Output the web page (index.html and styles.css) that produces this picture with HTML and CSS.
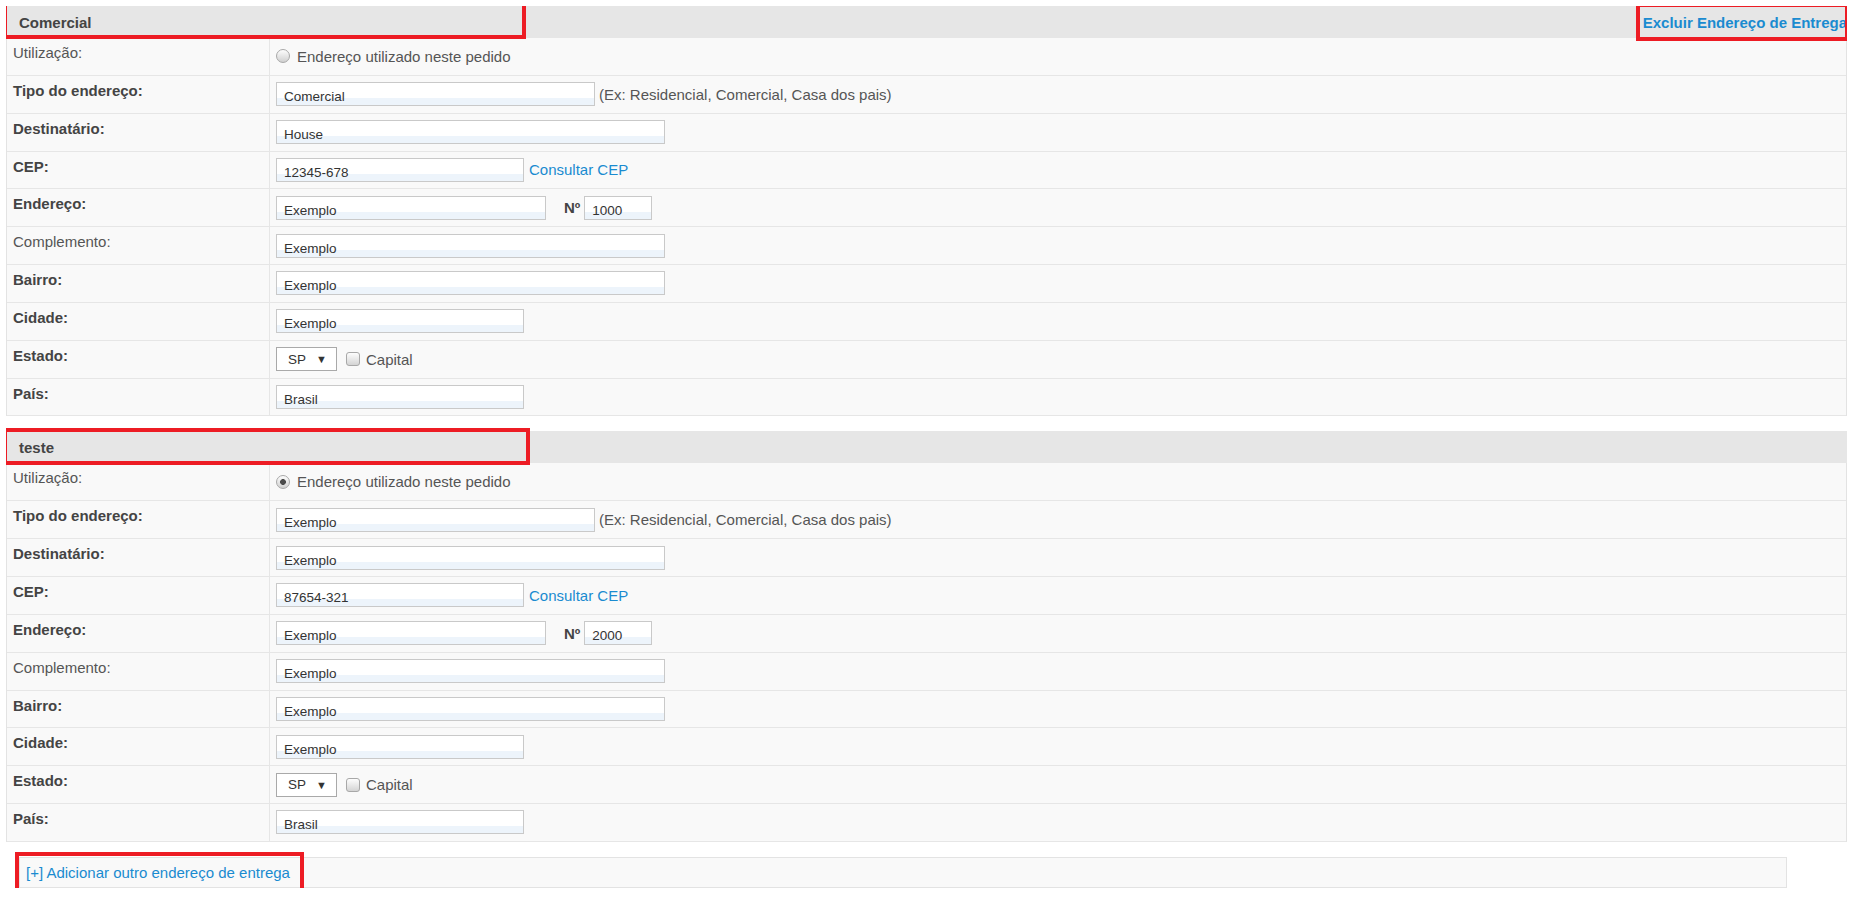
FILE: index.html
```html
<!DOCTYPE html>
<html>
<head>
  <meta charset="utf-8">
  <title>Endereços de Entrega</title>
  <link rel="stylesheet" href="styles.css">
</head>
<body>
  <div class="address">
    <div class="address-head">
      <span class="address-name">Comercial</span>
      <a class="remove-link" href="#">Excluir Endereço de Entrega</a>
      <span class="mark mark-name"></span>
      <span class="mark mark-remove"></span>
    </div>
    <div class="fields">
      <div class="row">
        <div class="label light">Utilização:</div>
        <div class="value"><input type="radio" class="radio" name="uso"><span>Endereço utilizado neste pedido</span></div>
      </div>
      <div class="row">
        <div class="label">Tipo do endereço:</div>
        <div class="value"><input class="input w-type" type="text" value="Comercial"><span class="hint">(Ex: Residencial, Comercial, Casa dos pais)</span></div>
      </div>
      <div class="row">
        <div class="label">Destinatário:</div>
        <div class="value"><input class="input w-long" type="text" value="House"></div>
      </div>
      <div class="row">
        <div class="label">CEP:</div>
        <div class="value"><input class="input w-mid" type="text" value="12345-678"><a class="cep-link" href="#">Consultar CEP</a></div>
      </div>
      <div class="row">
        <div class="label">Endereço:</div>
        <div class="value"><input class="input w-street" type="text" value="Exemplo"><span class="num-label">Nº</span><input class="input w-num" type="text" value="1000"></div>
      </div>
      <div class="row">
        <div class="label light">Complemento:</div>
        <div class="value"><input class="input w-long" type="text" value="Exemplo"></div>
      </div>
      <div class="row">
        <div class="label">Bairro:</div>
        <div class="value"><input class="input w-long" type="text" value="Exemplo"></div>
      </div>
      <div class="row">
        <div class="label">Cidade:</div>
        <div class="value"><input class="input w-mid" type="text" value="Exemplo"></div>
      </div>
      <div class="row">
        <div class="label">Estado:</div>
        <div class="value"><span class="select">SP</span><input type="checkbox" class="check"><span>Capital</span></div>
      </div>
      <div class="row">
        <div class="label">País:</div>
        <div class="value"><input class="input w-mid" type="text" value="Brasil"></div>
      </div>
    </div>
  </div>

  <div class="address">
    <div class="address-head">
      <span class="address-name">teste</span>
      <span class="mark mark-name2"></span>
    </div>
    <div class="fields">
      <div class="row">
        <div class="label light">Utilização:</div>
        <div class="value"><input type="radio" class="radio" name="uso" checked><span>Endereço utilizado neste pedido</span></div>
      </div>
      <div class="row">
        <div class="label">Tipo do endereço:</div>
        <div class="value"><input class="input w-type" type="text" value="Exemplo"><span class="hint">(Ex: Residencial, Comercial, Casa dos pais)</span></div>
      </div>
      <div class="row">
        <div class="label">Destinatário:</div>
        <div class="value"><input class="input w-long" type="text" value="Exemplo"></div>
      </div>
      <div class="row">
        <div class="label">CEP:</div>
        <div class="value"><input class="input w-mid" type="text" value="87654-321"><a class="cep-link" href="#">Consultar CEP</a></div>
      </div>
      <div class="row">
        <div class="label">Endereço:</div>
        <div class="value"><input class="input w-street" type="text" value="Exemplo"><span class="num-label">Nº</span><input class="input w-num" type="text" value="2000"></div>
      </div>
      <div class="row">
        <div class="label light">Complemento:</div>
        <div class="value"><input class="input w-long" type="text" value="Exemplo"></div>
      </div>
      <div class="row">
        <div class="label">Bairro:</div>
        <div class="value"><input class="input w-long" type="text" value="Exemplo"></div>
      </div>
      <div class="row">
        <div class="label">Cidade:</div>
        <div class="value"><input class="input w-mid" type="text" value="Exemplo"></div>
      </div>
      <div class="row">
        <div class="label">Estado:</div>
        <div class="value"><span class="select">SP</span><input type="checkbox" class="check"><span>Capital</span></div>
      </div>
      <div class="row">
        <div class="label">País:</div>
        <div class="value"><input class="input w-mid" type="text" value="Brasil"></div>
      </div>
    </div>
  </div>

  <div class="add-box">
    <a class="add-link" href="#">[+] Adicionar outro endereço de entrega</a>
    <span class="mark mark-add"></span>
  </div>
</body>
</html>
```

FILE: styles.css
```css
body {
  margin: 6px 7px 0 6px;
  font-family: "Liberation Sans", Arial, sans-serif;
  font-size: 15px;
  color: #555;
  background: #fff;
}

a {
  color: #1a8bd0;
  text-decoration: none;
}

/* bloco de endereço */
.address {
  margin-bottom: 15px;
}

.address-head {
  position: relative;
  display: flex;
  align-items: center;
  justify-content: space-between;
  height: 32px;
  padding-left: 13px;
  background: #e6e6e6;
}

.address-name {
  font-weight: bold;
  color: #444;
}

.remove-link {
  font-weight: bold;
}

.fields {
  border-left: 1px solid #e3e3e3;
  border-right: 1px solid #e3e3e3;
  background: #f9f9f9;
}

.row {
  display: grid;
  grid-template-columns: 263px 1fr;
  height: 37.85px;
  box-sizing: border-box;
  border-bottom: 1px solid #e6e6e6;
}

.label {
  padding: 6px 0 0 6px;
  line-height: 18px;
  border-right: 1px solid #e6e6e6;
  font-weight: bold;
  color: #444;
}

.label.light {
  font-weight: normal;
  color: #555;
}

.value {
  display: flex;
  align-items: center;
  padding-left: 6px;
  white-space: nowrap;
}

/* campos */
.input {
  box-sizing: border-box;
  height: 24px;
  margin: 0;
  padding: 5px 7px 0;
  border: 1px solid #c9c9c9;
  border-radius: 0;
  background: linear-gradient(#fff 0, #fff 70%, #edf4fb 70%, #edf4fb 100%);
  font-family: "Liberation Sans", Arial, sans-serif;
  font-size: 13.5px;
  color: #333;
  outline: none;
}

.w-type { width: 319px; }
.w-long { width: 389px; }
.w-mid { width: 248px; }
.w-street { width: 270px; }
.w-num { width: 68px; }

.hint {
  margin-left: 4px;
}

.cep-link {
  margin-left: 5px;
}

.num-label {
  margin: 0 4px 0 18px;
  font-weight: bold;
  color: #444;
}

.radio {
  -webkit-appearance: none;
  appearance: none;
  box-sizing: border-box;
  width: 14px;
  height: 14px;
  margin: 0 7px 0 0;
  border: 1px solid #a8a8a8;
  border-radius: 50%;
  background: linear-gradient(#fdfdfd, #d0d0d0);
}

.radio:checked {
  background: radial-gradient(circle, #4a4a4a 0, #4a4a4a 2.6px, transparent 3.2px),
    linear-gradient(#fdfdfd, #d0d0d0);
}

.select {
  position: relative;
  box-sizing: border-box;
  display: flex;
  align-items: center;
  width: 61px;
  height: 24px;
  padding-left: 11px;
  border: 1px solid #a9a9a9;
  background: #fff;
  font-size: 13.5px;
  color: #333;
}

.select::after {
  content: "▼";
  position: absolute;
  right: 9px;
  top: 5px;
  font-size: 11px;
  color: #333;
}

.check {
  -webkit-appearance: none;
  appearance: none;
  box-sizing: border-box;
  width: 14px;
  height: 14px;
  margin: 0 6px 0 9px;
  border: 1px solid #a8a8a8;
  border-radius: 3px;
  background: linear-gradient(#fdfdfd, #d4d4d4);
}

/* rodapé */
.add-box {
  position: relative;
  display: flex;
  align-items: center;
  height: 31px;
  box-sizing: border-box;
  margin: 12px 60px 0 13px;
  padding-left: 6px;
  border: 1px solid #e3e3e3;
  background: #f9f9f9;
}

/* marcações vermelhas */
.mark {
  position: absolute;
  box-sizing: border-box;
  border: 4px solid #ed1c24;
  pointer-events: none;
}

.mark-name {
  left: -3px;
  top: -4px;
  width: 523px;
  height: 37px;
}

.mark-remove {
  right: -2px;
  top: -3px;
  width: 213px;
  height: 38px;
}

.mark-name2 {
  left: -3px;
  top: -3px;
  width: 527px;
  height: 37px;
}

.mark-add {
  left: -5px;
  top: -6px;
  width: 289px;
  height: 41px;
}
```
